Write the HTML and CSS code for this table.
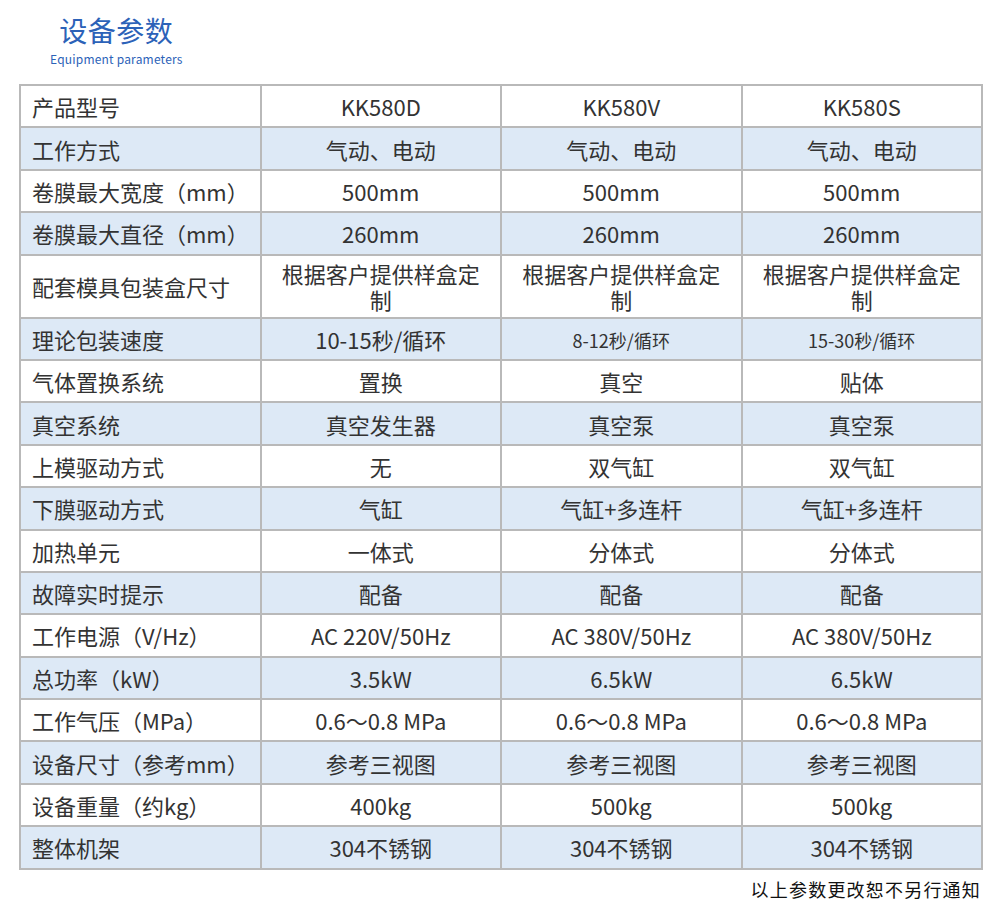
FILE: index.html
```html
<!DOCTYPE html>
<html lang="zh">
<head>
<meta charset="utf-8">
<link rel="stylesheet" href="styles.css">
</head>
<body>
<div class="page">
  <div class="heading">
    <div class="title">设备参数</div>
    <div class="subtitle">Equipment parameters</div>
  </div>
  <table class="spec">
    <colgroup><col class="c1"><col class="c2"><col class="c2"><col class="c2"></colgroup>
    <tr><td>产品型号</td><td>KK580D</td><td>KK580V</td><td>KK580S</td></tr>
    <tr><td>工作方式</td><td>气动、电动</td><td>气动、电动</td><td>气动、电动</td></tr>
    <tr><td>卷膜最大宽度（mm）</td><td>500mm</td><td>500mm</td><td>500mm</td></tr>
    <tr><td>卷膜最大直径（mm）</td><td>260mm</td><td>260mm</td><td>260mm</td></tr>
    <tr class="tall"><td>配套模具包装盒尺寸</td><td>根据客户提供样盒定制</td><td>根据客户提供样盒定制</td><td>根据客户提供样盒定制</td></tr>
    <tr><td>理论包装速度</td><td>10-15秒/循环</td><td><span class="small">8-12秒/循环</span></td><td><span class="small">15-30秒/循环</span></td></tr>
    <tr><td>气体置换系统</td><td>置换</td><td>真空</td><td>贴体</td></tr>
    <tr><td>真空系统</td><td>真空发生器</td><td>真空泵</td><td>真空泵</td></tr>
    <tr><td>上模驱动方式</td><td>无</td><td>双气缸</td><td>双气缸</td></tr>
    <tr><td>下膜驱动方式</td><td>气缸</td><td>气缸+多连杆</td><td>气缸+多连杆</td></tr>
    <tr><td>加热单元</td><td>一体式</td><td>分体式</td><td>分体式</td></tr>
    <tr><td>故障实时提示</td><td>配备</td><td>配备</td><td>配备</td></tr>
    <tr><td>工作电源（V/Hz）</td><td>AC 220V/50Hz</td><td>AC 380V/50Hz</td><td>AC 380V/50Hz</td></tr>
    <tr><td>总功率（kW）</td><td>3.5kW</td><td>6.5kW</td><td>6.5kW</td></tr>
    <tr><td>工作气压（MPa）</td><td>0.6～0.8 MPa</td><td>0.6～0.8 MPa</td><td>0.6～0.8 MPa</td></tr>
    <tr><td>设备尺寸（参考mm）</td><td>参考三视图</td><td>参考三视图</td><td>参考三视图</td></tr>
    <tr><td>设备重量（约kg）</td><td>400kg</td><td>500kg</td><td>500kg</td></tr>
    <tr><td>整体机架</td><td>304不锈钢</td><td>304不锈钢</td><td>304不锈钢</td></tr>
  </table>
  <div class="note">以上参数更改恕不另行通知</div>
</div>
</body>
</html>
```

FILE: styles.css
```css
html, body {
  margin: 0;
  padding: 0;
  background: #ffffff;
}
body {
  font-family: "Noto Sans CJK SC", "Noto Sans", sans-serif;
  color: #333333;
}
.page {
  padding: 15px 19px 0 19px;
}
.heading {
  display: inline-flex;
  flex-direction: column;
  align-items: center;
  margin-left: 31px;
  color: #2c62b8;
}
.title {
  font-size: 28px;
  line-height: 30px;
  letter-spacing: 0.5px;
}
.subtitle {
  font-size: 12px;
  line-height: 17px;
  margin-top: 5px;
  letter-spacing: 0.2px;
}
.spec {
  margin-top: 17px;
  width: 962px;
  border-collapse: collapse;
  table-layout: fixed;
  font-size: 22px;
}
.c1, .c2 { width: 240.5px; }
.spec td {
  border: 2px solid #b9b9b9;
  height: 40.4px;
  padding: 0;
  text-align: center;
  line-height: 26px;
  color: #333333;
}
.spec td:first-child {
  text-align: left;
  padding-left: 11px;
}
.spec tr:nth-child(even) td {
  background: #dde9f6;
}
.spec tr.tall td {
  height: 61px;
  padding-left: 14px;
  padding-right: 14px;
}
.spec tr.tall td:first-child {
  padding-left: 11px;
}
.small {
  font-size: 18px;
}
.note {
  text-align: right;
  font-size: 18px;
  letter-spacing: 1.2px;
  color: #111111;
  margin-top: 6px;
}
```
